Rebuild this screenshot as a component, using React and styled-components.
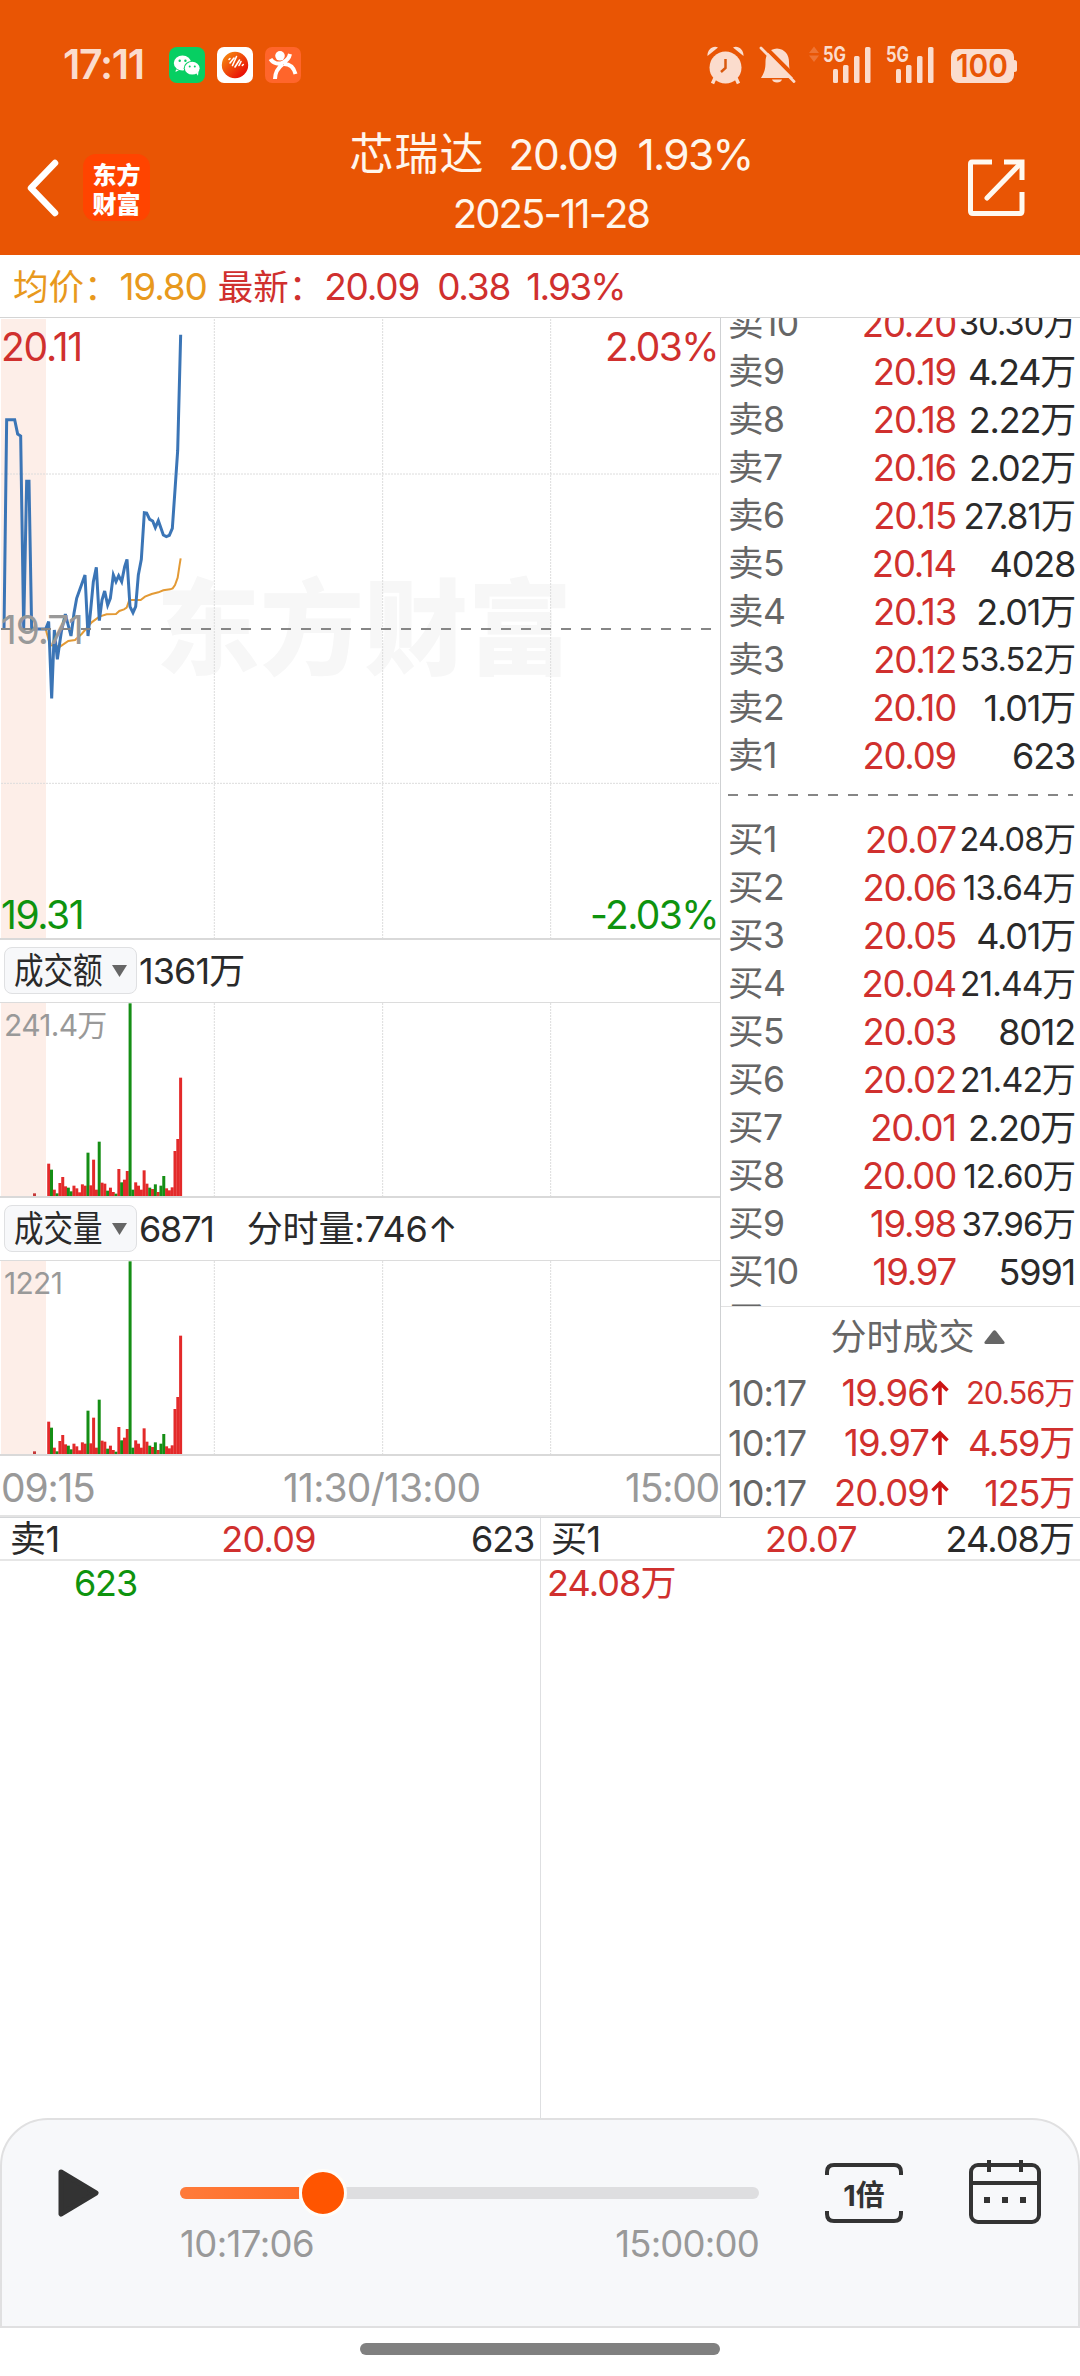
import React from 'react';
import styled, { createGlobalStyle } from 'styled-components';

const GlobalStyle = createGlobalStyle`
*{
box-sizing: border-box;
}
body{
margin: 0;
background: #fff;
font-family: Inter, "Noto Sans CJK SC", sans-serif;
font-weight: 400;
}
`

const red = '#d0302e';
const green = '#0e930e';
const amber = '#e8991d';
const bright = '#fbdccd';

const Screen = styled.div`
width: 1080px;
height: 2376px;
display: flex;
flex-direction: column;
background: #fff;
color: #2a2a2a;
overflow: hidden;
`
const Text = styled.span`
font-size: ${p => p.$size || 36}px;
letter-spacing: ${p => p.$ls ?? -1.2}px;
color: ${p => p.$color || 'inherit'};
margin-left: ${p => p.$ml || 0}px;
text-align: ${p => p.$align || 'inherit'};
white-space: pre;
`

// ---- header ----
const Header = styled.header`
height: 255px;
background: #e95504;
color: #fff6ec;
display: flex;
flex-direction: column;
`
const StatusBar = styled.div`
height: 129px;
padding: 0 62px 0 63px;
display: flex;
align-items: center;
justify-content: space-between;
color: ${bright};
`
const StatusGroup = styled.div`
display: flex;
align-items: center;
`
const Clock = styled.span`
width: 106px;
font-size: 41px;
font-weight: 600;
letter-spacing: -1.3px;
line-height: 38px;
padding-bottom: 2px;
`
const AppIcon = styled.svg`
display: block;
width: 36px;
height: 36px;
margin-right: 12px;
`
const StatusIcons = styled.svg`
display: block;
width: 311px;
height: 40px;
overflow: visible;
`
const TitleBar = styled.div`
height: 126px;
padding: 0 54px 0 25px;
display: grid;
grid-template-columns: 321px 410px 1fr;
align-items: center;
`
const TitleLeft = styled.div`
display: flex;
align-items: center;
margin-top: -9px;
gap: 23px;
`
const Logo = styled.div`
width: 67px;
height: 67px;
border-radius: 13px;
background: #ff4400;
color: #fff;
display: flex;
flex-direction: column;
align-items: center;
justify-content: center;
font: 900 24px/29px "Noto Sans CJK SC", sans-serif;
`
const TitleText = styled.div`
display: flex;
flex-direction: column;
align-items: center;
margin-top: -18px;
`
const TitleLine = styled.div`
height: ${p => p.$h}px;
line-height: ${p => p.$h}px;
white-space: nowrap;
`
const TitleRight = styled.div`
display: flex;
justify-content: flex-end;
margin-top: -9px;
`
const InfoRow = styled.div`
height: 63px;
padding-left: 13px;
line-height: 63px;
border-bottom: 1px solid #d4d4d4;
white-space: nowrap;
`

// ---- market ----
const Market = styled.main`
height: 1200px;
display: flex;
border-bottom: 1px solid #d4d6d8;
`
const Charts = styled.section`
width: 720px;
display: flex;
flex-direction: column;
border-bottom: 2px solid #e3e3e3;
`
const ChartBox = styled.div`
position: relative;
height: ${p => p.$h}px;
border-bottom: 2px solid #d9d9d9;
overflow: hidden;
`
const ChartSvg = styled.svg`
display: block;
position: relative;
width: 720px;
`
const ChartLabel = styled.span`
position: absolute;
top: ${p => p.$top}px;
${p => (p.$right ? `right: ${p.$right}px;` : `left: ${p.$left ?? 1}px;`)}
font-size: ${p => p.$size || 39}px;
line-height: 40px;
letter-spacing: ${p => p.$ls ?? -1.2}px;
color: ${p => p.$color};
`
const Watermark = styled.div`
position: absolute;
left: 156px;
top: 244px;
font: 900 104px/120px "Noto Sans CJK SC", sans-serif;
color: #f7f7f7;
`
const IndexRow = styled.div`
height: ${p => p.$h}px;
padding: 0 0 1px 4px;
display: flex;
align-items: center;
line-height: 44px;
border-bottom: 1px solid #dcdcdc;
`
const Picker = styled.div`
width: 133px;
height: 47px;
padding-left: 9px;
display: flex;
align-items: center;
border: 1px solid #dfe0e2;
border-radius: 8px;
background: #f7f8fa;
`
const PickerText = styled.span`
width: 98px;
font-size: 36px;
white-space: nowrap;
transform: scaleX(.82);
transform-origin: left center;
`
const Axis = styled.div`
flex: 1;
padding: 4px 1px 0;
display: grid;
grid-template-columns: 282px 1fr auto;
align-items: center;
color: #999;
`
const Side = styled.section`
width: 360px;
border-left: 1px solid #cfd1d3;
display: flex;
flex-direction: column;
`
const Book = styled.div`
height: 991px;
border-bottom: 1px solid #e2e2e2;
overflow: hidden;
`
const BookRows = styled.div`
margin-top: ${p => p.$top || 0}px;
`
const BookRow = styled.div`
height: 48px;
padding: 0 5px 0 7px;
display: grid;
grid-template-columns: 90px 138px 1fr;
align-items: center;
line-height: 48px;
text-align: right;
white-space: nowrap;
`
const BookLabel = styled.span`
font-size: 35.5px;
letter-spacing: -0.6px;
color: #666;
text-align: left;
`
const Dashes = styled.svg`
display: block;
width: 359px;
height: 36px;
`
const TickTitle = styled.div`
height: 60px;
padding-left: 34px;
display: flex;
align-items: center;
justify-content: center;
gap: 9px;
color: #666;
line-height: 44px;
`
const TickRow = styled.div`
height: 50px;
padding: 1px 6px 0 7px;
display: grid;
grid-template-columns: 90px 111px 20px 1fr;
align-items: center;
line-height: 48px;
text-align: right;
color: ${red};
white-space: nowrap;
`

// ---- quote halves ----
const Halves = styled.section`
flex: 1;
display: grid;
grid-template-columns: 540px 540px;
`
const Half = styled.div`
border-left: ${p => (p.$line ? '1px solid #dedfe1' : 'none')};
`
const HalfHead = styled.div`
height: 43px;
padding: 1px 6px 0 10px;
display: grid;
grid-template-columns: 70px 236px 1fr;
align-items: center;
line-height: 40px;
border-bottom: 2px solid #e6e6e6;
text-align: right;
`
const HalfBody = styled.div`
height: 44px;
line-height: 44px;
padding-left: ${p => p.$left}px;
`

// ---- player ----
const Player = styled.footer`
height: 210px;
padding: 40px 36px 0 55px;
display: flex;
align-items: flex-start;
border: 2px solid #e0e0e1;
border-radius: 48px 48px 0 0;
background: #f7f8fa;
`
const PlayIcon = styled.svg`
width: 44px;
height: 50px;
margin: 8px 79px 0 0;
`
const Progress = styled.div`
width: 579px;
margin-right: 66px;
`
const Track = styled.div`
height: 12px;
margin: 27px 0 25px;
display: flex;
align-items: center;
border-radius: 6px;
background: #dedee0;
`
const TrackFill = styled.div`
height: 12px;
border-radius: 6px 0 0 6px;
background: linear-gradient(90deg, #ff7b3a, #ff6d26);
`
const Thumb = styled.div`
flex: none;
width: 48px;
height: 48px;
border: 3px solid #fffdf8;
border-radius: 50%;
background: #ff5500;
`
const Times = styled.div`
display: flex;
justify-content: space-between;
line-height: 40px;
color: #999;
`
const Speed = styled.div`
position: relative;
width: 78px;
height: 60px;
margin: 3px 66px 0 0;
display: flex;
align-items: center;
justify-content: center;
font-size: 29px;
font-weight: 700;
color: #333;
`
const SpeedFrame = styled.svg`
position: absolute;
inset: 0;
width: 78px;
height: 60px;
`
const HomeArea = styled.div`
height: 48px;
padding-top: 15px;
`
const HomeBar = styled.div`
width: 360px;
height: 12px;
margin: 0 auto;
border-radius: 6px;
background: #808080;
`

// label, price, volume, font size of a volume too wide for the column
const sells = [
    ['卖10', '20.20', '30.30万', 32.5],
    ['卖9', '20.19', '4.24万'],
    ['卖8', '20.18', '2.22万'],
    ['卖7', '20.16', '2.02万'],
    ['卖6', '20.15', '27.81万', 35],
    ['卖5', '20.14', '4028'],
    ['卖4', '20.13', '2.01万'],
    ['卖3', '20.12', '53.52万', 32.5],
    ['卖2', '20.10', '1.01万'],
    ['卖1', '20.09', '623'],
];
const buys = [
    ['买1', '20.07', '24.08万', 32.5],
    ['买2', '20.06', '13.64万', 33.3],
    ['买3', '20.05', '4.01万'],
    ['买4', '20.04', '21.44万', 33.5],
    ['买5', '20.03', '8012'],
    ['买6', '20.02', '21.42万', 33.8],
    ['买7', '20.01', '2.20万'],
    ['买8', '20.00', '12.60万', 33.2],
    ['买9', '19.98', '37.96万', 33.2],
    ['买10', '19.97', '5991'],
    ['买11', '19.96', '5680'],
];
const ticks = [
    ['10:17', '19.96', '20.56万', 31],
    ['10:17', '19.97', '4.59万'],
    ['10:17', '20.09', '125万'],
];

// one bar per minute from 09:30, height in thirds of a pixel
const bars = [
    [100, 'r'], [82, 'g'], [22, 'r'], [11, 'g'], [42, 'r'], [60, 'r'], [32, 'r'], [28, 'g'], [17, 'g'],
    [34, 'r'], [26, 'r'], [14, 'r'], [38, 'r'], [34, 'r'], [133, 'g'], [35, 'r'], [112, 'r'], [22, 'r'],
    [166, 'g'], [43, 'r'], [40, 'r'], [19, 'g'], [28, 'r'], [15, 'r'], [10, 'g'], [84, 'r'], [44, 'g'],
    [52, 'r'], [78, 'r'], [581, 'g'], [22, 'g'], [44, 'r'], [34, 'r'], [22, 'r'], [80, 'r'], [40, 'r'],
    [28, 'g'], [24, 'r'], [38, 'g'], [15, 'r'], [34, 'g'], [63, 'g'], [26, 'r'], [20, 'r'], [29, 'r'],
    [138, 'r'], [174, 'r'], [358, 'r'],
];

const price = '12,960 20,329 44,329 53,372 62,378 71,957 80,514 87,514 95,957 137,957 146,935 155,1165 163,960 172,1048 184,965 196,912 213,978 222,910 230,865 255,795 264,978 272,900 280,815 289,772 298,932 306,870 314,843 323,885 331,865 340,795 348,815 356,797 365,815 374,770 381,748 390,890 399,908 407,890 415,795 424,748 433,608 440,609 449,628 458,633 466,653 475,632 483,655 490,675 499,680 508,676 517,655 525,540 533,422 542,74';
const average = '137,957 150,1005 180,1010 205,993 225,990 245,972 275,937 298,920 320,913 348,912 358,903 372,898 380,893 388,870 422,870 435,860 455,852 475,847 490,841 510,838 518,835 525,825 533,803 538,770 542,745';

function PriceChart() {
    return (
        <ChartBox $h={622}>
            <Watermark>东方财富</Watermark>
            <ChartSvg height="620" viewBox="0 24 2160 1860">
                <rect x="3" y="27" width="135" height="1860" fill="#fdeee8" />
                <g stroke="#dcdcdc" strokeWidth="3" strokeDasharray="6 3">
                    <path d="M3 492H2157M3 1420H2157M643 27V1884M1148 27V1884M1652 27V1884" />
                </g>
                <polyline points={average} fill="none" stroke="#e39a35" strokeWidth="6" />
                <polyline points={price} fill="none" stroke="#3b75b6" strokeWidth="9" />
                <path d="M3 957H2140" stroke="#868686" strokeWidth="6" strokeDasharray="30 30" />
            </ChartSvg>
            <ChartLabel $top={9} $color={red}>20.11</ChartLabel>
            <ChartLabel $top={9} $right={2} $ls={-1.6} $color={red}>2.03%</ChartLabel>
            <ChartLabel $top={292} $color="#999">19.71</ChartLabel>
            <ChartLabel $top={577} $ls={-1.4} $color={green}>19.31</ChartLabel>
            <ChartLabel $top={577} $right={2} $ls={-1.6} $color={green}>-2.03%</ChartLabel>
        </ChartBox>
    )
}

function BarChart({ label }) {
    return (
        <ChartBox $h={195}>
            <ChartSvg height="194" viewBox="0 0 2160 582">
                <rect x="3" y="0" width="135" height="582" fill="#fdeee8" />
                <path d="M643 0V582M1148 0V582M1652 0V582" stroke="#dcdcdc" strokeWidth="3" strokeDasharray="6 3" />
                <rect x="99" y="571" width="9" height="11" fill="#c63a3a" />
                {bars.map(([h, c], i) => (
                    <rect key={i} x={141.6 + i * 8.42} y={582 - h} width="9" height={h} fill={c === 'r' ? '#e32a2a' : '#158e15'} />
                ))}
            </ChartSvg>
            <ChartLabel $top={2} $left={4} $size={30} $ls={-0.7} $color="#999">{label}</ChartLabel>
        </ChartBox>
    )
}

function IndexPicker({ name }) {
    return (
        <Picker>
            <PickerText>{name}</PickerText>
            <svg width="15" height="12" viewBox="0 0 15 12"><path d="M0 0H15L7.5 12Z" fill="#666" /></svg>
        </Picker>
    )
}

function BookList({ rows, top }) {
    return (
        <BookRows $top={top}>
            {rows.map(([name, value, volume, size]) => (
                <BookRow key={name}>
                    <BookLabel>{name}</BookLabel>
                    <Text $color={red} $size={36.5}>{value}</Text>
                    <Text $size={size} $ls={size ? -0.9 : -1.2}>{volume}</Text>
                </BookRow>
            ))}
        </BookRows>
    )
}

function Signal({ x }) {
    return (
        <g transform={`translate(${x} 0)`} fill={bright}>
            <text x="0" y="17" fontSize="21" fontWeight="700" textLength="23" lengthAdjust="spacingAndGlyphs">5G</text>
            <rect x="10" y="24" width="5" height="14" rx="1.5" />
            <rect x="20" y="20" width="5.5" height="18" rx="1.5" />
            <rect x="31" y="11" width="5.5" height="27" rx="1.5" />
            <rect x="42" y="2" width="5.5" height="36" rx="1.5" />
        </g>
    )
}

export default function App() {
    return (
        <Screen>
            <GlobalStyle />
            <Header>
                <StatusBar>
                    <StatusGroup>
                        <Clock>17:11</Clock>
                        <AppIcon viewBox="0 0 36 36">
                            <rect width="36" height="36" rx="8" fill="#07cf62" />
                            <path d="M7 22.5L6.5 25L10 23Z" fill="#fff" />
                            <ellipse cx="13.5" cy="16" rx="8.7" ry="7.6" fill="#fff" />
                            <ellipse cx="23" cy="21.2" rx="8.3" ry="7.3" fill="#07cf62" />
                            <ellipse cx="23.2" cy="21.2" rx="7.4" ry="6.4" fill="#fff" />
                            <path d="M27 26L29 28.8L29.5 24.5Z" fill="#fff" />
                            <g fill="#07cf62">
                                <circle cx="10.7" cy="13.8" r="1.2" />
                                <circle cx="16.4" cy="13.8" r="1.2" />
                                <circle cx="20.7" cy="19.5" r="1" />
                                <circle cx="25.8" cy="19.5" r="1" />
                            </g>
                        </AppIcon>
                        <AppIcon viewBox="0 0 36 36">
                            <defs>
                                <linearGradient id="ball" x1="0" y1="0" x2="1" y2="1">
                                    <stop offset="0.1" stopColor="#f5860f" />
                                    <stop offset="0.9" stopColor="#e80505" />
                                </linearGradient>
                            </defs>
                            <rect width="36" height="36" rx="7" fill="#fff" />
                            <circle cx="18" cy="18" r="13.2" fill="url(#ball)" />
                            <path d="M12 12.5L13 11.5M13 16L17 11M15.5 18.5L19.5 9.5M18 20L22.5 13M22 18.5L24 14.5M25.3 18.5L26.3 17.5" stroke="#fff" strokeWidth="1.6" strokeLinecap="round" />
                        </AppIcon>
                        <AppIcon viewBox="0 0 36 36">
                            <rect width="36" height="36" rx="7" fill="#ff652b" />
                            <circle cx="15" cy="8.8" r="4.8" fill="#fff" />
                            <path d="M5.5 12C8.5 17 14 17.5 18 15.5C22.5 13.5 24 11.5 25 7M10 32C10 24 14 20 18 17M19 17C25.5 17 29 21 30.5 27" fill="none" stroke="#fff" strokeWidth="4" />
                        </AppIcon>
                    </StatusGroup>
                    <StatusIcons viewBox="0 0 311 40">
                        <g fill={bright}>
                            <path d="M.5 11C0 5 6 0 11 2.5ZM36.5 11C37 5 31 0 26 2.5Z" />
                            <circle cx="18.5" cy="22.5" r="16" />
                            <path d="M8 33L5.5 38.5M29 33L31.5 38.5" stroke={bright} strokeWidth="3.5" />
                            <path d="M18.5 14V23L14 27" fill="none" stroke="#d9590f" strokeWidth="2.5" />
                            <path d="M70 3.5C62 4 58.5 10 58.5 17C58.5 25 57 28 54 33H87C83.5 28 82 25 82 17C82 10 78 4 70 3.5Z" />
                            <path d="M65 34.5H75Q74 37.5 70 37.5Q66 37.5 65 34.5Z" />
                        </g>
                        <path d="M56 0L90 34" stroke="#e95504" strokeWidth="4" />
                        <path d="M54 3L87 36.5" stroke={bright} strokeWidth="2.8" strokeLinecap="round" />
                        <path d="M107 1.5L112 8H102ZM107 17L102 10.5H112Z" fill="#ee7434" />
                        <Signal x={116} />
                        <Signal x={179} />
                        <rect x="244" y="4" width="63" height="34" rx="8" fill={bright} />
                        <rect x="305" y="15" width="5" height="12" rx="2.5" fill={bright} />
                        <text x="249" y="32" fontSize="31" fontWeight="600" fill="#e95504" textLength="52" lengthAdjust="spacingAndGlyphs">100</text>
                    </StatusIcons>
                </StatusBar>
                <TitleBar>
                    <TitleLeft>
                        <svg width="35" height="58" viewBox="0 0 35 58">
                            <path d="M30 4L6 29L30 54" fill="none" stroke="#fff" strokeWidth="6.5" strokeLinecap="round" strokeLinejoin="round" />
                        </svg>
                        <Logo>
                            <span>东方</span>
                            <span>财富</span>
                        </Logo>
                    </TitleLeft>
                    <TitleText>
                        <TitleLine $h={62}>
                            <Text $size={44} $ls={1}>芯瑞达</Text>
                            <Text $size={42.5} $ls={-1.4} $ml={24}>20.09</Text>
                            <Text $size={42.5} $ls={-1.7} $ml={20}>1.93%</Text>
                        </TitleLine>
                        <TitleLine $h={58}>
                            <Text $size={40} $ls={-1.9}>2025-11-28</Text>
                        </TitleLine>
                    </TitleText>
                    <TitleRight>
                        <svg width="60" height="60" viewBox="0 0 60 60" fill="none" stroke="#fff9f0" strokeWidth="5">
                            <path d="M26 4H6Q4.5 4 4.5 6V53Q4.5 55.5 7 55.5H54Q56 55.5 56 53V34" />
                            <path d="M38 4H56V22" />
                            <path d="M21 40L55 5" strokeLinecap="round" />
                        </svg>
                    </TitleRight>
                </TitleBar>
            </Header>
            <InfoRow>
                <Text $color={amber} $size={35.5} $ls={0}>均价：</Text>
                <Text $color={amber} $size={37}>19.80</Text>
                <Text $color={red} $size={35.5} $ls={0} $ml={11}>最新：</Text>
                <Text $color={red} $size={37}>20.09</Text>
                <Text $color={red} $size={37} $ml={18}>0.38</Text>
                <Text $color={red} $size={37} $ls={-1.8} $ml={16}>1.93%</Text>
            </InfoRow>
            <Market>
                <Charts>
                    <PriceChart />
                    <IndexRow $h={63}>
                        <IndexPicker name="成交额" />
                        <Text $ml={2} $ls={-0.9}>1361万</Text>
                    </IndexRow>
                    <BarChart label="241.4万" />
                    <IndexRow $h={63}>
                        <IndexPicker name="成交量" />
                        <Text $ml={2}>6871</Text>
                        <Text $ml={33} $ls={-0.2}>分时量:746↑</Text>
                    </IndexRow>
                    <BarChart label="1221" />
                    <Axis>
                        <Text $size={39}>09:15</Text>
                        <Text $size={39} $ls={-0.8}>11:30/13:00</Text>
                        <Text $size={39}>15:00</Text>
                    </Axis>
                </Charts>
                <Side>
                    <Book>
                        <BookList rows={sells} top={-18} />
                        <Dashes viewBox="0 0 359 36">
                            <path d="M7 15H352" stroke="#868686" strokeWidth="2" strokeDasharray="10 10" />
                        </Dashes>
                        <BookList rows={buys} />
                    </Book>
                    <TickTitle>
                        <Text $ls={0}>分时成交</Text>
                        <svg width="21" height="14" viewBox="0 0 21 14"><path d="M9 1Q10.5-.5 12 1L20.5 12Q21 14 19 14H2Q0 14 .5 12Z" fill="#666" /></svg>
                    </TickTitle>
                    {ticks.map(([time, value, volume, size]) => (
                        <TickRow key={value}>
                            <Text $color="#666" $align="left" $ls={-0.9}>{time}</Text>
                            <Text $size={36.5} $ls={-0.9}>{value}</Text>
                            <svg width="20" height="26" viewBox="0 0 20 26"><path d="M11 25V3M3.5 10.5L11 3L18.5 10.5" fill="none" stroke="#cc1414" strokeWidth="3.5" /></svg>
                            <Text $size={size}>{volume}</Text>
                        </TickRow>
                    ))}
                </Side>
            </Market>
            <Halves>
                <Half>
                    <HalfHead>
                        <Text $ls={-0.5} $align="left">卖1</Text>
                        <Text $color={red} $ls={-0.7}>20.09</Text>
                        <Text>623</Text>
                    </HalfHead>
                    <HalfBody $left={74}><Text $color={green}>623</Text></HalfBody>
                </Half>
                <Half $line>
                    <HalfHead>
                        <Text $ls={-0.5} $align="left">买1</Text>
                        <Text $color={red} $ls={-0.7}>20.07</Text>
                        <Text $ls={-0.9}>24.08万</Text>
                    </HalfHead>
                    <HalfBody $left={6}><Text $color={red} $ls={-0.9}>24.08万</Text></HalfBody>
                </Half>
            </Halves>
            <Player>
                <PlayIcon viewBox="0 0 44 50">
                    <path d="M4 4L39 25L4 46Z" fill="#333" stroke="#333" strokeWidth="5" strokeLinejoin="round" />
                </PlayIcon>
                <Progress>
                    <Track>
                        <TrackFill style={{ width: 119 }} />
                        <Thumb />
                    </Track>
                    <Times>
                        <Text $size={36.5} $ls={-0.6}>10:17:06</Text>
                        <Text $size={36.5} $ls={-0.8}>15:00:00</Text>
                    </Times>
                </Progress>
                <Speed>
                    <SpeedFrame viewBox="0 0 78 60" fill="none" stroke="#333" strokeWidth="4">
                        <path d="M2 12V9Q2 2 9 2H69Q76 2 76 9V12M2 48V51Q2 58 9 58H69Q76 58 76 51V48" />
                    </SpeedFrame>
                    1倍
                </Speed>
                <svg width="72" height="64" viewBox="0 0 72 64">
                    <rect x="2" y="5" width="68" height="57" rx="7" fill="none" stroke="#333" strokeWidth="4" />
                    <path d="M2 23H70M20 0V12M52 0V12" stroke="#333" strokeWidth="4" />
                    <path d="M15 37h6v6h-6zM33 37h6v6h-6zM51 37h6v6h-6z" fill="#333" />
                </svg>
            </Player>
            <HomeArea>
                <HomeBar />
            </HomeArea>
        </Screen>
    )
}
